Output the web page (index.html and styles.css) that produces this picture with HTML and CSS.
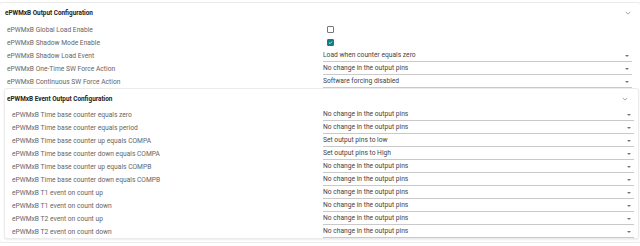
FILE: index.html
```html
<!DOCTYPE html>
<html lang="en">
<head>
    <meta charset="UTF-8">
    <title>ePWMxB Output Configuration</title>
    <link rel="stylesheet" href="styles.css">
</head>
<body>

    <div class="panel outer">
        <div class="panel-header">
            <span>ePWMxB Output Configuration</span>
            <svg class="chevron" viewBox="0 0 8 5"><path d="M1 1 L4 4 L7 1" /></svg>
        </div>
        <div class="rows">
            <div class="row">
                <label>ePWMxB Global Load Enable</label>
                <div class="control"><span class="check"></span></div>
            </div>
            <div class="row">
                <label>ePWMxB Shadow Mode Enable</label>
                <div class="control"><span class="check checked"><svg viewBox="0 0 8 8"><path d="M1.6 4.2 L3.3 5.8 L6.5 2.4" /></svg></span></div>
            </div>
            <div class="row">
                <label>ePWMxB Shadow Load Event</label>
                <div class="select">Load when counter equals zero</div>
            </div>
            <div class="row">
                <label>ePWMxB One-Time SW Force Action</label>
                <div class="select">No change in the output pins</div>
            </div>
            <div class="row">
                <label>ePWMxB Continuous SW Force Action</label>
                <div class="select">Software forcing disabled</div>
            </div>
        </div>

        <div class="panel inner">
            <div class="panel-header">
                <span>ePWMxB Event Output Configuration</span>
                <svg class="chevron" viewBox="0 0 8 5"><path d="M1 1 L4 4 L7 1" /></svg>
            </div>
            <div class="rows">
                <div class="row">
                    <label>ePWMxB Time base counter equals zero</label>
                    <div class="select">No change in the output pins</div>
                </div>
                <div class="row">
                    <label>ePWMxB Time base counter equals period</label>
                    <div class="select">No change in the output pins</div>
                </div>
                <div class="row">
                    <label>ePWMxB Time base counter up equals COMPA</label>
                    <div class="select">Set output pins to low</div>
                </div>
                <div class="row">
                    <label>ePWMxB Time base counter down equals COMPA</label>
                    <div class="select">Set output pins to High</div>
                </div>
                <div class="row">
                    <label>ePWMxB Time base counter up equals COMPB</label>
                    <div class="select">No change in the output pins</div>
                </div>
                <div class="row">
                    <label>ePWMxB Time base counter down equals COMPB</label>
                    <div class="select">No change in the output pins</div>
                </div>
                <div class="row">
                    <label>ePWMxB T1 event on count up</label>
                    <div class="select">No change in the output pins</div>
                </div>
                <div class="row">
                    <label>ePWMxB T1 event on count down</label>
                    <div class="select">No change in the output pins</div>
                </div>
                <div class="row">
                    <label>ePWMxB T2 event on count up</label>
                    <div class="select">No change in the output pins</div>
                </div>
                <div class="row">
                    <label>ePWMxB T2 event on count down</label>
                    <div class="select">No change in the output pins</div>
                </div>
            </div>
        </div>
    </div>

</body>
</html>
```

FILE: styles.css
```css
* {
    margin: 0;
    padding: 0;
    box-sizing: border-box;
}

body {
    background: #fff;
    font-family: Roboto, 'Liberation Sans', sans-serif;
    font-size: 6.7px;
    color: #666;
    padding-top: 2px;
}

.panel {
    background: #fff;
    border: 1px solid #ebebeb;
    border-radius: 3px;
}

.outer {
    width: 642px;
    margin-left: -1px;
    padding-bottom: 3px;
}

.inner {
    margin: 0 1px 0 4px;
    box-shadow: 0 1px 2px rgba(0, 0, 0, 0.08);
}

.panel-header {
    display: flex;
    align-items: center;
    justify-content: space-between;
    height: 20px;
    padding: 0 9px 0 5px;
    font-size: 6.4px;
    font-weight: bold;
    color: #222;
}

.inner .panel-header {
    height: 19px;
    padding: 0 10px 0 2px;
}

.chevron {
    width: 6px;
    height: 4px;
    fill: none;
    stroke: #888;
    stroke-width: 1;
}

.rows {
    padding: 0 8px 0 7px;
}

.inner .rows {
    padding: 0 4px 0 7px;
}

.row {
    display: grid;
    grid-template-columns: 316px 1fr;
    height: 13px;
    align-items: center;
}

.inner .row {
    grid-template-columns: 311px 1fr;
}

.row label {
    white-space: nowrap;
    color: #666;
}

.control {
    padding-left: 4px;
    display: flex;
    align-items: center;
}

.check {
    width: 7px;
    height: 7px;
    border: 1px solid #777;
    border-radius: 1px;
    display: flex;
}

.check.checked {
    background: #117c8a;
    border-color: #117c8a;
}

.check svg {
    width: 100%;
    height: 100%;
    fill: none;
    stroke: #fff;
    stroke-width: 1.2;
}

.select {
    position: relative;
    height: 12px;
    line-height: 11px;
    margin-top: 1px;
    border-bottom: 1px solid #c9c9c9;
    color: #444;
}

.select::after {
    content: "";
    position: absolute;
    right: 3px;
    top: 5px;
    border-left: 2.5px solid transparent;
    border-right: 2.5px solid transparent;
    border-top: 2.5px solid #777;
}
```
